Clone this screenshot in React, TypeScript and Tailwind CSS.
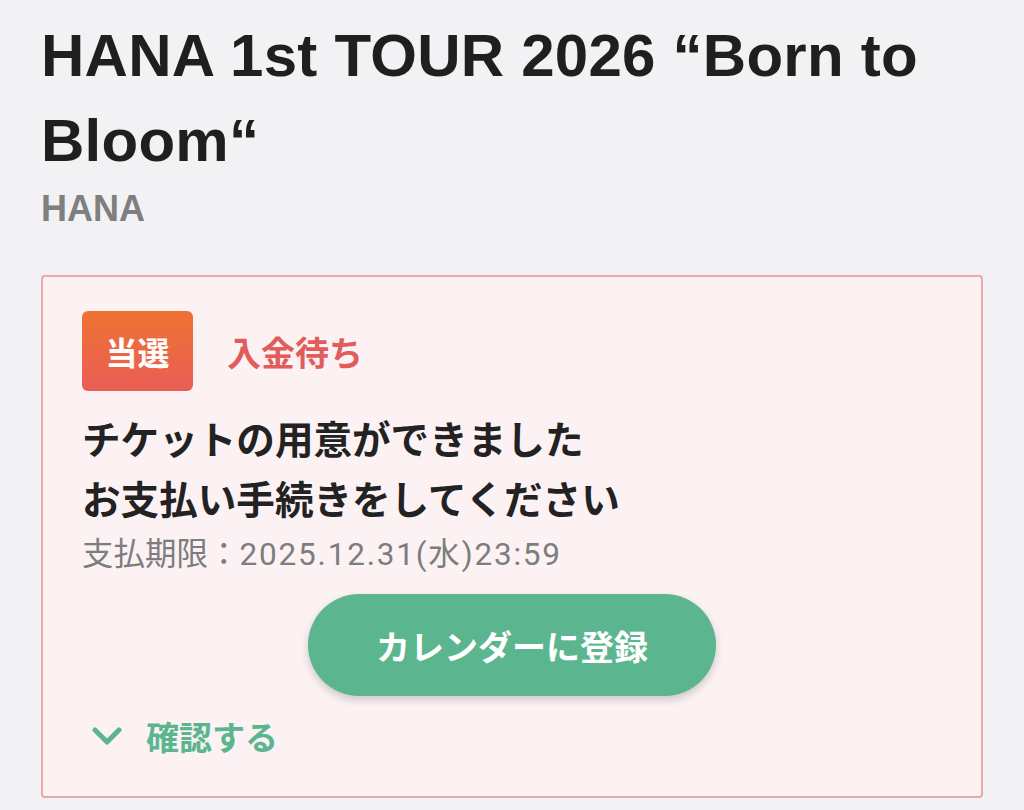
export default function App() {
  return (
    <div className="min-h-screen bg-[#f2f2f4] px-[41px] pt-[13px] pb-4 font-['Liberation_Sans','Noto_Sans_CJK_JP',sans-serif]">
      <h1 className="text-[60px] leading-[85px] font-bold tracking-[0.25px] text-[#1f1f1f]">
        HANA 1st TOUR 2026 “Born to Bloom“
      </h1>
      <p className="mt-[6px] text-[36px] leading-[40px] font-bold text-[#7f7f7f]">HANA</p>

      <div className="mt-[46px] rounded-[4px] border-2 border-[#eaa9ab] bg-[#fcf2f3] px-[39px] pt-[34px] pb-[40px]">
        <div className="flex items-center gap-[34px]">
          <span className="flex h-[80px] w-[111px] items-center justify-center rounded-[6px] bg-[linear-gradient(180deg,#ef7233_0%,#e95e55_100%)] font-['Noto_Sans_CJK_JP',sans-serif] text-[32px] font-bold text-white">
            当選
          </span>
          <span className="font-['Noto_Sans_CJK_JP',sans-serif] text-[34px] font-bold text-[#e25c5c]">
            入金待ち
          </span>
        </div>

        <p className="mt-[16px] font-['Noto_Sans_CJK_JP',sans-serif] text-[38.6px] leading-[60px] font-bold text-[#222222]">
          チケットの用意ができました
          <br />
          お支払い手続きをしてください
        </p>
        <p className="mt-[4px] font-['Noto_Sans_CJK_JP',sans-serif] text-[31.5px] leading-[40px] text-[#7d7d7d]">
          支払期限：
          <span className="font-['Roboto','Noto_Sans_CJK_JP',sans-serif] tracking-[1.8px]">2025.12.31(水)23:59</span>
        </p>

        <div className="mt-[19px] flex justify-center">
          <button className="h-[102px] w-[408px] rounded-full bg-[#5bb690] font-['Noto_Sans_CJK_JP',sans-serif] text-[34px] font-bold text-white shadow-[0_4px_8px_rgba(0,0,0,0.18)]">
            カレンダーに登録
          </button>
        </div>

        <div className="mt-[20px] flex items-center gap-[24px] pl-[10px]">
          <svg width="30" height="20" viewBox="0 0 30 20" fill="none">
            <path d="M3 4 L15 16 L27 4" stroke="#5bb690" strokeWidth="5" strokeLinecap="round" strokeLinejoin="round" />
          </svg>
          <span className="font-['Noto_Sans_CJK_JP',sans-serif] text-[33px] leading-[40px] font-bold text-[#5bb690]">
            確認する
          </span>
        </div>
      </div>
    </div>
  );
}
